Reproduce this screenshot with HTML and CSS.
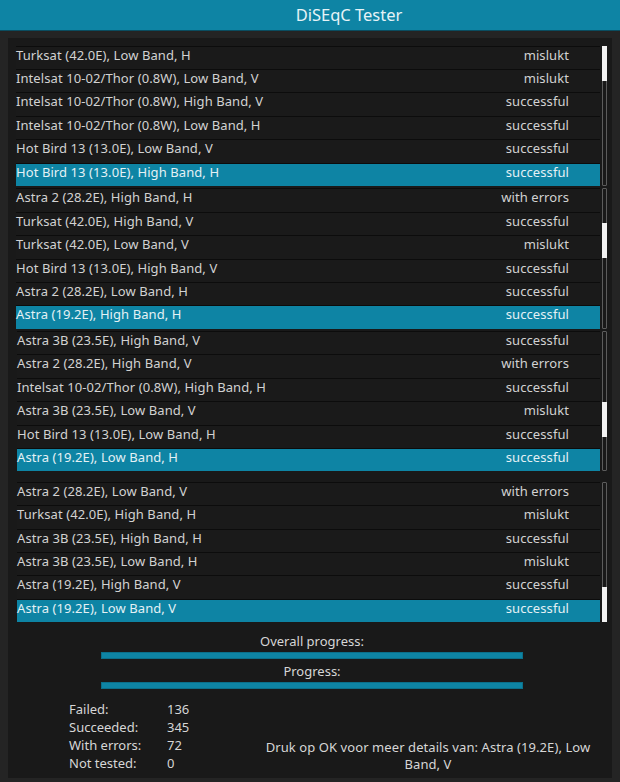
FILE: index.html
```html
<!DOCTYPE html>
<html>
<head>
<meta charset="utf-8">
<link rel="stylesheet" href="styles.css">
</head>
<body>
<div class="header"><span class="title">DiSEqC Tester</span></div>
<div class="panel">
  <div class="block">
    <div class="rows">
      <div class="row"><span>Turksat (42.0E), Low Band, H</span><span class="status">mislukt</span></div>
      <div class="row"><span>Intelsat 10-02/Thor (0.8W), Low Band, V</span><span class="status">mislukt</span></div>
      <div class="row"><span>Intelsat 10-02/Thor (0.8W), High Band, V</span><span class="status">successful</span></div>
      <div class="row"><span>Intelsat 10-02/Thor (0.8W), Low Band, H</span><span class="status">successful</span></div>
      <div class="row"><span>Hot Bird 13 (13.0E), Low Band, V</span><span class="status">successful</span></div>
      <div class="row sel"><span>Hot Bird 13 (13.0E), High Band, H</span><span class="status">successful</span></div>
    </div>
    <div class="track"><div class="thumb"></div></div>
  </div>
  <div class="block">
    <div class="rows">
      <div class="row"><span>Astra 2 (28.2E), High Band, H</span><span class="status">with errors</span></div>
      <div class="row"><span>Turksat (42.0E), High Band, V</span><span class="status">successful</span></div>
      <div class="row"><span>Turksat (42.0E), Low Band, V</span><span class="status">mislukt</span></div>
      <div class="row"><span>Hot Bird 13 (13.0E), High Band, V</span><span class="status">successful</span></div>
      <div class="row"><span>Astra 2 (28.2E), Low Band, H</span><span class="status">successful</span></div>
      <div class="row sel"><span>Astra (19.2E), High Band, H</span><span class="status">successful</span></div>
    </div>
    <div class="track"><div class="thumb p2"></div></div>
  </div>
  <div class="block shifted">
    <div class="rows">
      <div class="row"><span>Astra 3B (23.5E), High Band, V</span><span class="status">successful</span></div>
      <div class="row"><span>Astra 2 (28.2E), High Band, V</span><span class="status">with errors</span></div>
      <div class="row"><span>Intelsat 10-02/Thor (0.8W), High Band, H</span><span class="status">successful</span></div>
      <div class="row"><span>Astra 3B (23.5E), Low Band, V</span><span class="status">mislukt</span></div>
      <div class="row"><span>Hot Bird 13 (13.0E), Low Band, H</span><span class="status">successful</span></div>
      <div class="row sel"><span>Astra (19.2E), Low Band, H</span><span class="status">successful</span></div>
    </div>
    <div class="track"><div class="thumb p3"></div></div>
  </div>
  <div class="block shifted last">
    <div class="rows">
      <div class="row"><span>Astra 2 (28.2E), Low Band, V</span><span class="status">with errors</span></div>
      <div class="row"><span>Turksat (42.0E), High Band, H</span><span class="status">mislukt</span></div>
      <div class="row"><span>Astra 3B (23.5E), High Band, H</span><span class="status">successful</span></div>
      <div class="row"><span>Astra 3B (23.5E), Low Band, H</span><span class="status">mislukt</span></div>
      <div class="row"><span>Astra (19.2E), High Band, V</span><span class="status">successful</span></div>
      <div class="row sel"><span>Astra (19.2E), Low Band, V</span><span class="status">successful</span></div>
    </div>
    <div class="track"><div class="thumb p4"></div></div>
  </div>

  <div class="progress">
    <div class="plabel first">Overall progress:</div>
    <div class="bar"></div>
    <div class="plabel">Progress:</div>
    <div class="bar"></div>
  </div>

  <div class="bottom">
    <div class="stats">
      <span>Failed:</span><span>136</span>
      <span>Succeeded:</span><span>345</span>
      <span>With errors:</span><span>72</span>
      <span>Not tested:</span><span>0</span>
    </div>
    <div class="hint">Druk op OK voor meer details van: Astra (19.2E), Low Band, V</div>
  </div>
</div>
</body>
</html>
```
FILE: styles.css
```css
html, body {
  margin: 0;
  padding: 0;
}
body {
  width: 620px;
  height: 782px;
  background: #242424;
  font-family: "Noto Sans", "Open Sans", sans-serif;
  font-size: 13px;
  color: #d2d2d2;
  overflow: hidden;
}
.header {
  height: 30px;
  background: #0e84a4;
  border-bottom: 1px solid #0a4d60;
  box-sizing: content-box;
  padding-left: 78px;
  display: flex;
  justify-content: center;
  align-items: flex-start;
}
.title {
  font-size: 16.5px;
  line-height: 22px;
  padding-top: 4px;
  color: #e6f3f7;
}
.panel {
  margin: 7px 8px 0 8px;
  height: 740px;
  box-sizing: border-box;
  background: #191919;
  padding: 7.7px 5px 0 8px;
  display: flex;
  flex-direction: column;
}
.block {
  display: flex;
  gap: 2px;
  height: 140.4px;
  margin-bottom: 2.3px;
}
.block.shifted {
  padding-left: 1px;
}
.block.last {
  margin-top: 8px;
  margin-bottom: 0;
}
.rows {
  flex: 1;
  display: flex;
  flex-direction: column;
}
.row {
  height: 23.4px;
  box-sizing: border-box;
  border-top: 1px solid #0c0c0c;
  background: #1a1a1a;
  display: flex;
  justify-content: space-between;
  line-height: 17.5px;
  padding-right: 31px;
  white-space: nowrap;
  letter-spacing: 0.08px;
}
.row.sel {
  background: #0e84a4;
  color: #e4f1f5;
}
.track {
  width: 5px;
  box-sizing: border-box;
  border: 1px solid #5c5c5c;
  border-radius: 1px;
  position: relative;
}
.thumb {
  position: absolute;
  left: -1px;
  right: -1px;
  top: -1px;
  height: 35px;
  background: #f2f2f2;
}
.thumb.p2 { top: 34px; }
.thumb.p3 { top: 70px; }
.thumb.p4 { top: auto; bottom: -1px; }

.progress {
  width: 422px;
  margin-left: 85px;
  display: flex;
  flex-direction: column;
}
.plabel {
  text-align: center;
  line-height: 17.7px;
  margin-top: 4.3px;
  color: #d6d6d6;
}
.plabel.first {
  margin-top: 10.8px;
}
.bar {
  height: 7px;
  margin-top: 1.3px;
  background: #0e84a4;
  box-shadow: inset 0 0 0 1px #0b6f8a;
}
.bottom {
  display: flex;
  align-items: flex-end;
  margin-top: 10.5px;
}
.stats {
  margin-left: 53px;
  width: 189px;
  display: grid;
  grid-template-columns: 98px auto;
  line-height: 18.2px;
  color: #d6d6d6;
}
.hint {
  width: 340px;
  text-align: center;
  line-height: 17px;
  color: #d6d6d6;
  letter-spacing: 0.08px;
}
```
